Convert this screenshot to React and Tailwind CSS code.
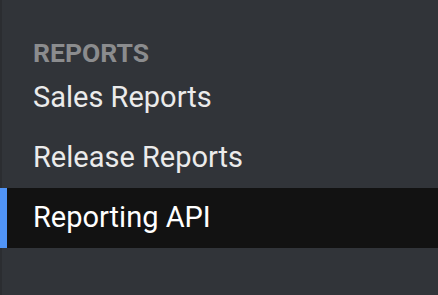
export default function App() {
  const items = [
    { label: "Sales Reports", active: false },
    { label: "Release Reports", active: false },
    { label: "Reporting API", active: true },
  ];
  return (
    <div
      className="w-[438px] h-[295px] bg-[#313439] border-l-2 border-[#2b2d31] pt-[40px]"
      style={{ fontFamily: "Roboto, 'Noto Sans', sans-serif" }}
    >
      <div className="pl-[31px] text-[26.5px] leading-[26px] font-bold text-[#8b8c8e] mb-[2px]">
        REPORTS
      </div>
      {items.map((it) => (
        <div
          key={it.label}
          className={
            it.active
              ? "relative -ml-[2px] pl-[33px] h-[60px] flex items-center bg-[#121212] text-white text-[29px]"
              : "pl-[31px] h-[60px] flex items-center text-[#ebebeb] text-[29px]"
          }
        >
          {it.active && (
            <div className="absolute left-0 top-0 bottom-0 w-[7px] bg-[#5094f7]" />
          )}
          {it.label}
        </div>
      ))}
    </div>
  );
}
